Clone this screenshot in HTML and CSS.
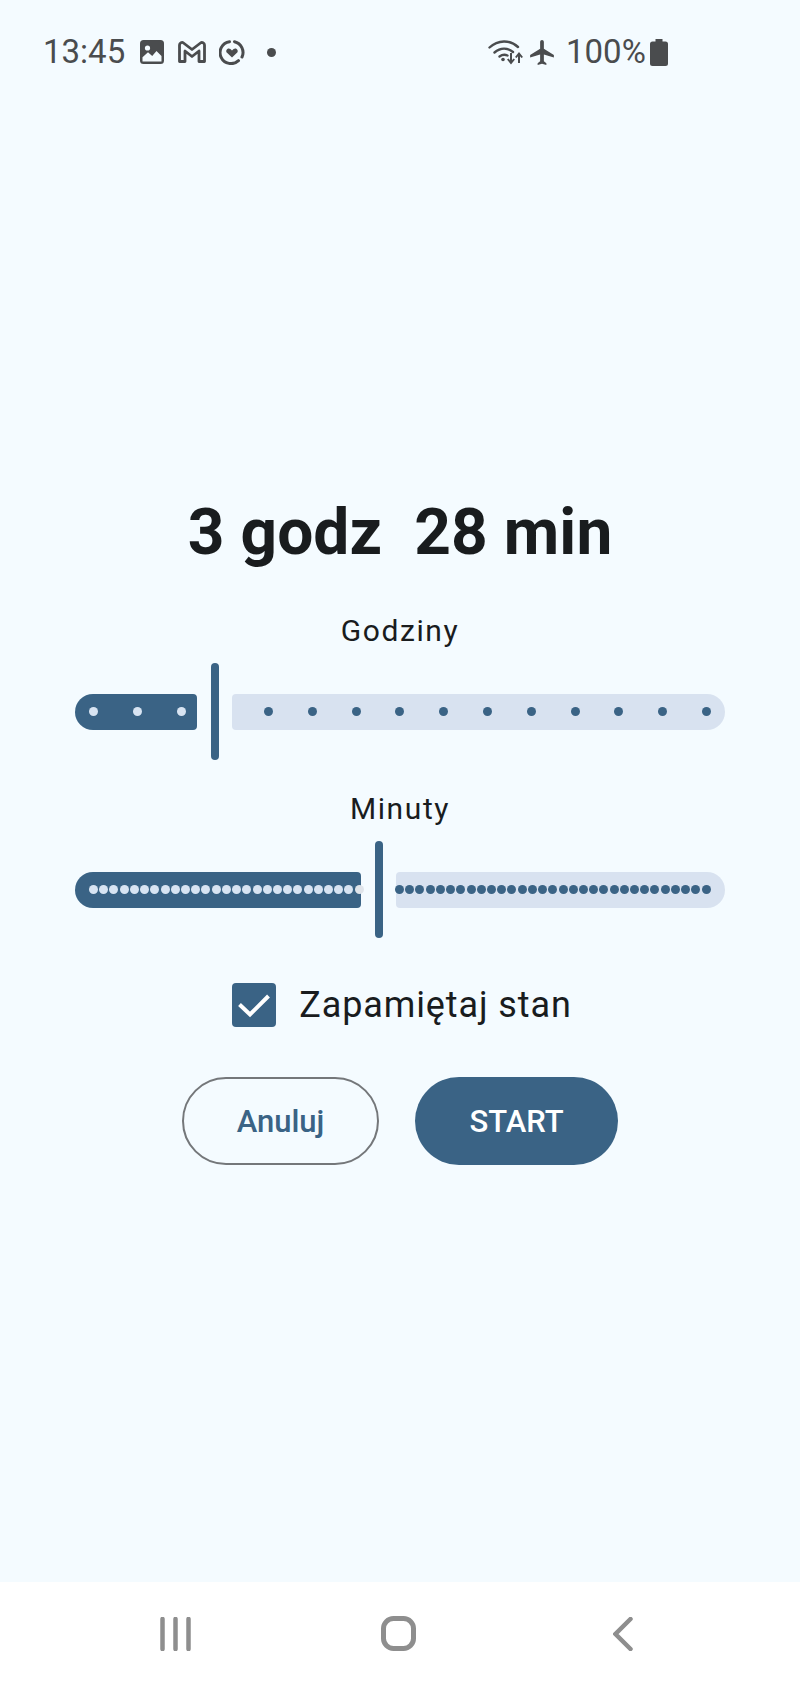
FILE: index.html
```html
<!DOCTYPE html>
<html lang="pl">
<head>
    <meta charset="UTF-8">
    <meta name="viewport" content="width=device-width, initial-scale=1.0">
    <title>Timer</title>
    <link rel="stylesheet" href="styles.css">
</head>
<body>
    <div class="ekran">
        <div class="status">
            <div class="status-lewo">
                <span class="czas">13:45</span>
                <svg class="ikona-obraz" viewBox="0 0 24 24"><rect width="24" height="24" rx="3.5" fill="#4a4c4e"/><circle cx="7.5" cy="8" r="2.6" fill="#f4fbff"/><path d="M2.5 21.5v-4.2l5.5-5 4.2 3.6 4.3-5 5 5.2v5.4z" fill="#f4fbff"/></svg>
                <svg class="ikona-m" viewBox="0 0 28 22"><path d="M1.500 20.500V4C1.500 1.800 4 .8 5.500 2L14 8.500 22.500 2C24 .8 26.500 1.800 26.500 4V20.500h-5.500V10l-7 5.500L7 10V20.500z" fill="none" stroke="#4a4c4e" stroke-width="2.800" stroke-linejoin="round"/></svg>
                <svg class="ikona-serce" viewBox="0 0 26 26"><path d="M15.500 2.700a11 11 0 0 1 7.500 15.300M19.500 21.700a11 11 0 1 1-9-19" fill="none" stroke="#4a4c4e" stroke-width="3" stroke-linecap="round"/><path d="M13 18.500l-5-4.700c-2.200-2.400.900-5.800 3.400-3.700L13 11.500l1.600-1.400c2.500-2.100 5.600 1.300 3.400 3.700z" fill="#4a4c4e"/></svg>
                <span class="kropka"></span>
            </div>
            <div class="status-prawo">
                <svg class="ikona-wifi" viewBox="0 0 35 25"><path d="M1.500 7.500C10 -.5 22 -.5 30 7M6.500 12.500c6-5 13-5 18.500-.5M11.500 16.500c2.800-2 5.800-2 8-1" fill="none" stroke="#4a4c4e" stroke-width="2.400" stroke-linecap="round"/><circle cx="15" cy="19.500" r="1.800" fill="#4a4c4e"/><path d="M23 13v9M19.800 19l3.200 4 3.200-4M31 23v-9M27.800 17.500l3.200-4 3.200 4" fill="none" stroke="#4a4c4e" stroke-width="2"/></svg>
                <svg class="ikona-samolot" viewBox="2 2 19 20"><path d="M21 16v-2l-8-5V3.500c0-.83-.67-1.500-1.500-1.500S10 2.670 10 3.500V9l-8 5v2l8-2.500V19l-2 1.500V22l3.500-1 3.500 1v-1.500L13 19v-5.500z" fill="#4a4c4e"/></svg>
                <span class="procent">100%</span>
                <svg class="ikona-bateria" viewBox="0 0 18 27"><path d="M5.500 0h7v2.500h3A2.500 2.500 0 0 1 18 5v19.500a2.500 2.500 0 0 1-2.500 2.500h-13A2.500 2.500 0 0 1 0 24.500V5a2.500 2.500 0 0 1 2.500-2.500h3z" fill="#4a4c4e"/></svg>
            </div>
        </div>

        <div class="tresc">
            <h1 class="wynik">3 godz  28 min</h1>

            <p class="etykieta">Godziny</p>
            <div class="suwak">
                <div class="tor aktywny godziny" style="width: 122px">
                    <span></span><span></span><span></span>
                </div>
                <div class="uchwyt"></div>
                <div class="tor nieaktywny godziny">
                    <span></span><span></span><span></span><span></span><span></span><span></span><span></span><span></span><span></span><span></span><span></span>
                </div>
            </div>

            <p class="etykieta druga">Minuty</p>
            <div class="suwak">
                <div class="tor aktywny minuty" style="width: 286px">
                    <span></span><span></span><span></span><span></span><span></span><span></span><span></span><span></span><span></span>
                    <span></span><span></span><span></span><span></span><span></span><span></span><span></span><span></span><span></span>
                    <span></span><span></span><span></span><span></span><span></span><span></span><span></span><span></span><span class="ostatnia"></span>
                </div>
                <div class="uchwyt"></div>
                <div class="tor nieaktywny minuty">
                    <span></span><span></span><span></span><span></span><span></span><span></span><span></span><span></span><span></span><span></span>
                    <span></span><span></span><span></span><span></span><span></span><span></span><span></span><span></span><span></span><span></span>
                    <span></span><span></span><span></span><span></span><span></span><span></span><span></span><span></span><span></span><span></span><span></span>
                </div>
            </div>

            <div class="zapamietaj">
                <div class="pole">
                    <svg viewBox="0 0 44 44"><path d="M7.500 21.500L18 31.500 36.500 13" fill="none" stroke="#fff" stroke-width="4"/></svg>
                </div>
                <span>Zapamiętaj stan</span>
            </div>

            <div class="przyciski">
                <button class="przycisk anuluj">Anuluj</button>
                <button class="przycisk start">START</button>
            </div>
        </div>

        <div class="nawigacja">
            <svg class="nav-ostatnie" viewBox="0 0 31 34"><path d="M2.500 2v30M15.500 2v30M28.500 2v30" stroke="#8e8e8e" stroke-width="4.500" stroke-linecap="round"/></svg>
            <svg class="nav-dom" viewBox="0 0 35 35"><rect x="2.500" y="2.500" width="30" height="30" rx="10" fill="none" stroke="#8e8e8e" stroke-width="5"/></svg>
            <svg class="nav-wstecz" viewBox="0 0 20 34"><path d="M17.500 2L2.500 17 17.500 32" fill="none" stroke="#8e8e8e" stroke-width="4.500" stroke-linecap="round"/></svg>
        </div>
    </div>
</body>
</html>
```

FILE: styles.css
```css
* {
    margin: 0;
    padding: 0;
    box-sizing: border-box;
}
body {
    font-family: Roboto, sans-serif;
    background-color: #f4fbff;
    color: #191c1e;
}
.ekran {
    height: 1689px;
    display: flex;
    flex-direction: column;
}
.status {
    height: 81px;
    padding: 36px 132px 0 43px;
    display: flex;
    justify-content: space-between;
    align-items: flex-start;
    color: #4a4c4e;
    font-size: 33px;
    line-height: 32px;
}
.status-lewo, .status-prawo {
    display: flex;
    align-items: center;
    height: 32px;
}
.czas {
    width: 81px;
}
.ikona-obraz {
    width: 24px;
    height: 24px;
    margin-left: 16px;
}
.ikona-m {
    width: 28px;
    height: 22px;
    margin-left: 14px;
}
.ikona-serce {
    width: 26px;
    height: 26px;
    margin-left: 13px;
}
.kropka {
    width: 9px;
    height: 9px;
    border-radius: 50%;
    background-color: #4a4c4e;
    margin-left: 22px;
}
.ikona-wifi {
    width: 35px;
    height: 25px;
}
.ikona-samolot {
    width: 26px;
    height: 25px;
    margin-left: 6px;
}
.procent {
    margin-left: 11px;
    width: 78px;
}
.ikona-bateria {
    width: 18px;
    height: 27px;
    margin-left: 6px;
}
.tresc {
    flex: 1;
    display: flex;
    flex-direction: column;
    align-items: center;
    justify-content: center;
}
.wynik {
    font-size: 64px;
    line-height: 70px;
    font-weight: 700;
    letter-spacing: 0.1px;
    white-space: pre;
    margin-bottom: 43px;
}
.etykieta {
    font-size: 30px;
    line-height: 40px;
    letter-spacing: 1.6px;
}
.etykieta.druga {
    margin-top: 29px;
}
.suwak {
    width: 100%;
    height: 97px;
    padding: 0 75px;
    margin-top: 12px;
    display: flex;
    align-items: center;
}
.tor {
    height: 36px;
    display: flex;
    align-items: center;
    flex-shrink: 0;
}
.tor span {
    width: 9px;
    height: 9px;
    border-radius: 50%;
    flex-shrink: 0;
}
.aktywny {
    background-color: #3a6385;
    border-radius: 18px 4px 4px 18px;
    padding-left: 14px;
}
.aktywny span {
    background-color: #d8e4f2;
}
.aktywny .ostatnia {
    background-color: #dfe4ea;
}
.nieaktywny {
    flex: 1;
    background-color: #d8e2f0;
    border-radius: 4px 18px 18px 4px;
}
.nieaktywny span {
    background-color: #3a6385;
}
.godziny {
    gap: 34.8px;
}
.nieaktywny.godziny {
    padding-left: 32px;
}
.minuty {
    gap: 1.22px;
}
.nieaktywny.minuty span:first-child {
    margin-left: -1px;
}
.uchwyt {
    width: 8px;
    height: 97px;
    border-radius: 4px;
    background-color: #3a6385;
    margin: 0 13px 0 14px;
    flex-shrink: 0;
}
.zapamietaj {
    display: flex;
    align-items: center;
    gap: 23px;
    margin-top: 45px;
    margin-left: 4px;
    font-size: 36px;
    line-height: 44px;
    letter-spacing: 0.9px;
}
.pole {
    width: 44px;
    height: 44px;
    border-radius: 4px;
    background-color: #3a6385;
}
.pole svg {
    display: block;
}
.przyciski {
    display: flex;
    gap: 36px;
    margin-top: 50px;
}
.przycisk {
    height: 88px;
    border-radius: 44px;
    font-family: Roboto, sans-serif;
    font-size: 31px;
    font-weight: 500;
}
.anuluj {
    width: 197px;
    background: none;
    border: 2px solid #74777a;
    color: #3a6385;
}
.start {
    width: 203px;
    background-color: #3a6385;
    border: none;
    color: #fff;
}
.nawigacja {
    height: 107px;
    background-color: #fff;
    display: flex;
    align-items: center;
    padding: 0 0 4px 160px;
}
.nav-ostatnie {
    width: 31px;
    height: 34px;
}
.nav-dom {
    width: 35px;
    height: 35px;
    margin-left: 190px;
}
.nav-wstecz {
    width: 20px;
    height: 34px;
    margin-left: 197px;
}
```
